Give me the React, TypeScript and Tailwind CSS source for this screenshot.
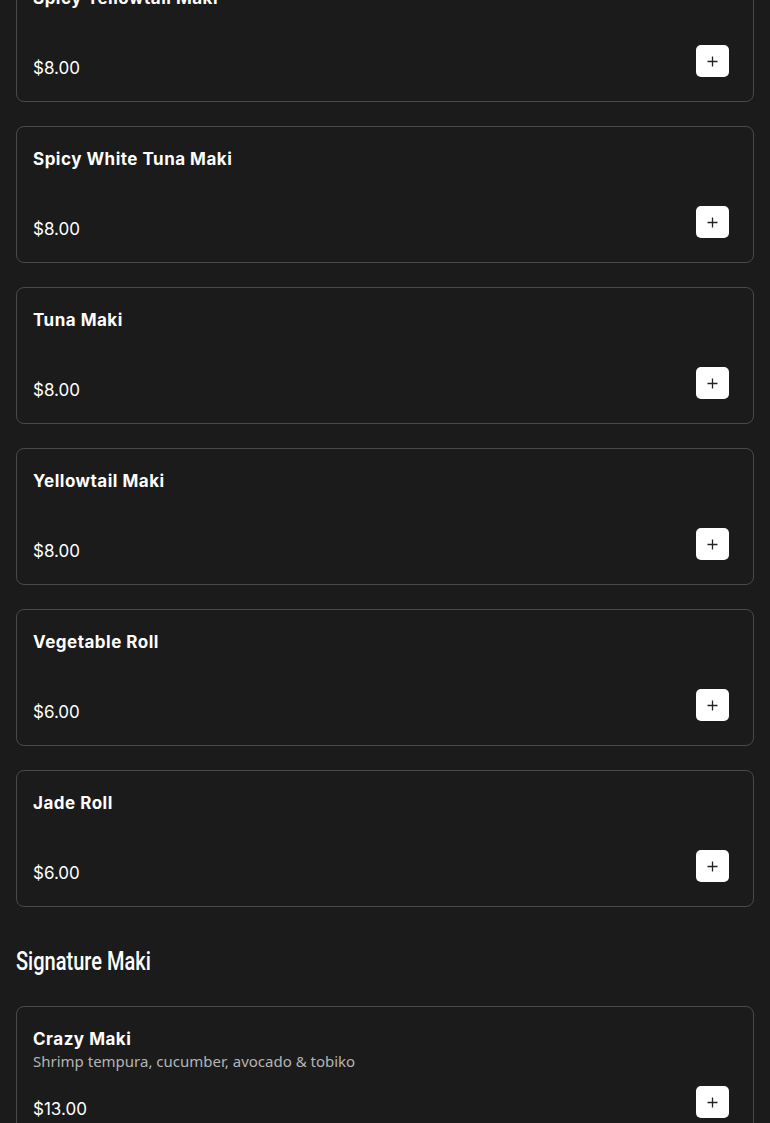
import React from 'react';

interface MenuItem {
    name: string;
    description?: string;
    price: string;
}

const makiItems: MenuItem[] = [
    { name: 'Spicy Yellowtail Maki', price: '$8.00' },
    { name: 'Spicy White Tuna Maki', price: '$8.00' },
    { name: 'Tuna Maki', price: '$8.00' },
    { name: 'Yellowtail Maki', price: '$8.00' },
    { name: 'Vegetable Roll', price: '$6.00' },
    { name: 'Jade Roll', price: '$6.00' },
];

const signatureItems: MenuItem[] = [
    { name: 'Crazy Maki', description: 'Shrimp tempura, cucumber, avocado & tobiko', price: '$13.00' },
];

const PlusIcon = () => (
    <svg width="11" height="11" viewBox="0 0 11 11" fill="none" stroke="#222" strokeWidth="1.3">
        <path d="M5.5 0.5v10M0.5 5.5h10" />
    </svg>
);

const ItemCard: React.FC<{ item: MenuItem }> = ({ item }) => (
    <div className="border border-[#4a4a4a] rounded-lg px-4 pt-5 pb-[21px]">
        <h3 className="text-[17px] leading-6 font-bold tracking-[0.5px] text-white">{item.name}</h3>
        <p className="text-[15px] leading-5 text-[#b5b5b5] min-h-5" style={{ fontFamily: '"Noto Sans", sans-serif' }}>
            {item.description}
        </p>
        <div className="mt-[15px] flex items-start justify-between">
            <span className="mt-[11px] text-[17px] leading-6 text-white">{item.price}</span>
            <button className="mr-2 w-[33px] h-8 rounded-[5px] bg-white flex items-center justify-center">
                <PlusIcon />
            </button>
        </div>
    </div>
);

export default function App() {
    return (
        <div
            className="h-screen bg-[#1b1b1b] overflow-hidden"
            style={{ fontFamily: 'Inter, "Noto Sans", sans-serif' }}
        >
            <div className="px-4 -mt-[35px]">
                <div className="flex flex-col gap-6">
                    {makiItems.map((item) => (
                        <ItemCard key={item.name} item={item} />
                    ))}
                </div>

                <h2 className="mt-[36px] mb-[27px] h-9 flex items-center text-white">
                    <span
                        className="inline-block origin-left scale-x-[0.77] text-[26px] font-medium whitespace-nowrap"
                        style={{ fontFamily: 'Roboto, "Liberation Sans", sans-serif' }}
                    >
                        Signature Maki
                    </span>
                </h2>

                <div className="flex flex-col gap-6">
                    {signatureItems.map((item) => (
                        <ItemCard key={item.name} item={item} />
                    ))}
                </div>
            </div>
        </div>
    );
}
